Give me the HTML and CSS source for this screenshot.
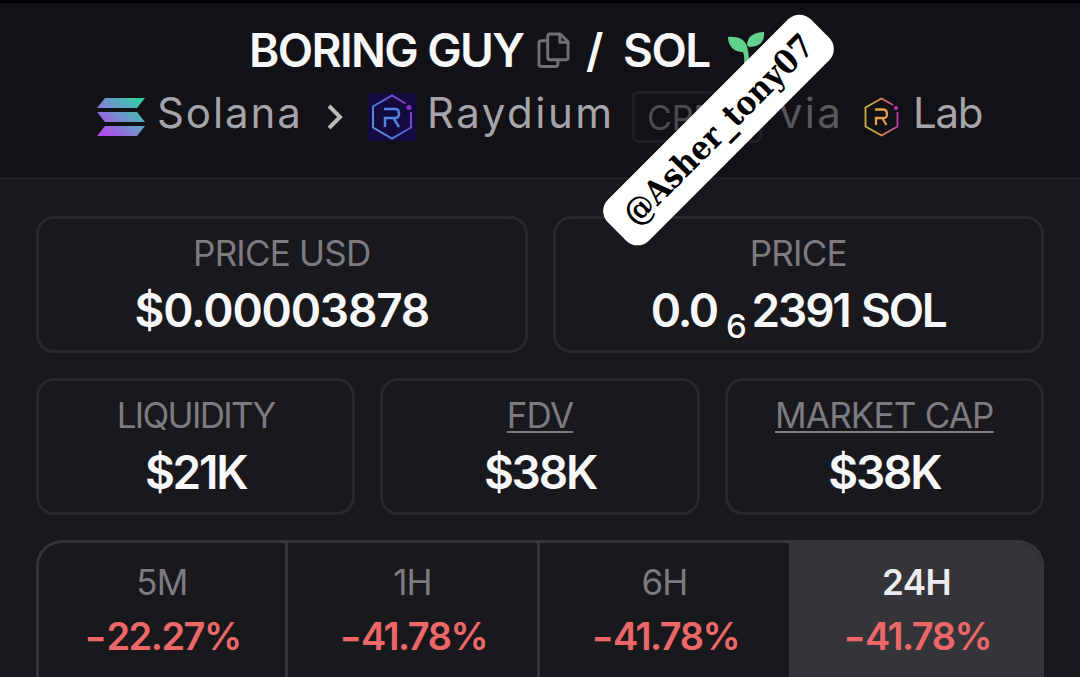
FILE: index.html
```
<!DOCTYPE html>
<html lang="en">
<head>
    <meta charset="UTF-8">
    <title>BORING GUY / SOL</title>
    <link rel="stylesheet" href="styles.css">
</head>

<body>

    <div class="header">
        <div class="pair-row">
            <span class="token-name">BORING GUY</span>
            <svg class="copy-icon" viewBox="0 0 34 38" fill="none" stroke="#717175" stroke-width="3" stroke-linejoin="round">
                <path d="M10 9H4.5Q2 9 2 11.5V33Q2 35.500 4.500 35.500H19Q21.500 35.500 21.500 33V28.500"/>
                <path d="M13.500 2H24L32 10V26Q32 28.500 29.500 28.500H13.500Q11 28.500 11 26V4.500Q11 2 13.500 2Z"/>
                <path d="M23.500 2V10.500H32"/>
            </svg>
            <span class="slash">/</span>
            <span class="quote-name">SOL</span>
            <svg class="sprout-icon" viewBox="0 0 40 36" fill="#62d18d">
                <path d="M0 5C11 4 19 8 20 19C21 22 21 30 21 36H16C16 30 17 25 15 20C6 20 0 14 0 5Z"/>
                <path d="M36 0C37 10 31 15 21 15L19 13C19 5 26 0 36 0Z"/>
            </svg>
        </div>

        <div class="chain-row">
            <svg class="solana-icon" viewBox="0 0 48 38">
                <defs>
                    <linearGradient id="sol" gradientUnits="userSpaceOnUse" x1="44" y1="0" x2="8" y2="40">
                        <stop offset="0" stop-color="#2bd3a0"/>
                        <stop offset="0.5" stop-color="#7092cc"/>
                        <stop offset="1" stop-color="#b645ed"/>
                    </linearGradient>
                </defs>
                <g fill="url(#sol)">
                    <path d="M8 0H48L40 10H0Z"/>
                    <path d="M0 14H40L48 24H8Z"/>
                    <path d="M8 28H48L40 38H0Z"/>
                </g>
            </svg>
            <span class="chain">Solana</span>
            <svg class="chevron" viewBox="0 0 16 26" fill="none" stroke="#b9b9b9" stroke-width="4">
                <path d="M2 2L13 13L2 24"/>
            </svg>
            <svg class="raydium-icon" viewBox="0 0 48 48" fill="none">
                <defs>
                    <linearGradient id="ray" x1="0" y1="1" x2="1" y2="0.2">
                        <stop offset="0" stop-color="#619bdc"/>
                        <stop offset="0.55" stop-color="#5267d2"/>
                        <stop offset="1" stop-color="#9b2bc6"/>
                    </linearGradient>
                </defs>
                <rect width="48" height="48" fill="#130b40"/>
                <path d="M37.500 10.500L24 2.500L5 13.500V34.500L24 45.500L43 34.500V19" stroke="url(#ray)" stroke-width="2"/>
                <path d="M16 16H27Q31 16 31 20.500T27 25H17V34M26 26L31 34" stroke="#5584dd" stroke-width="2.500"/>
                <circle cx="41" cy="14.500" r="2.500" fill="#8b35c9"/>
            </svg>
            <span class="dex">Raydium</span>
            <span class="pool-type">CPMM</span>
            <span class="via">via</span>
            <svg class="lab-icon" viewBox="0 0 36 40" fill="none">
                <defs>
                    <linearGradient id="lab" x1="0" y1="0.5" x2="1" y2="0.4">
                        <stop offset="0" stop-color="#c6b63d"/>
                        <stop offset="0.5" stop-color="#dc8a4d"/>
                        <stop offset="1" stop-color="#bd36b4"/>
                    </linearGradient>
                </defs>
                <path d="M29 8L17.500 1.500L1.500 10.500V29.500L17.500 38.500L33.500 29.500V15" stroke="url(#lab)" stroke-width="1.800"/>
                <path d="M11 12.500H19Q23 12.500 23 17T19 21H12V28M18.500 21.500L22.500 28" stroke="#e0a050" stroke-width="2.300"/>
                <circle cx="32" cy="11" r="2" fill="#bd36b4"/>
            </svg>
            <span class="lab">Lab</span>
        </div>
    </div>

    <div class="stats">
        <div class="row">
            <div class="card">
                <span class="label">PRICE USD</span>
                <span class="value">$0.00003878</span>
            </div>
            <div class="card">
                <span class="label">PRICE</span>
                <span class="value price-sol">0.0<span class="zeros">6</span>2391 SOL</span>
            </div>
        </div>

        <div class="row">
            <div class="card">
                <span class="label liquidity">LIQUIDITY</span>
                <span class="value short">$21K</span>
            </div>
            <div class="card">
                <span class="label underlined">FDV</span>
                <span class="value short">$38K</span>
            </div>
            <div class="card">
                <span class="label underlined">MARKET CAP</span>
                <span class="value short">$38K</span>
            </div>
        </div>

        <div class="tabs">
            <div class="tab">
                <span class="label">5M</span>
                <span class="change"><span class="minus">−</span>22.27%</span>
            </div>
            <div class="tab">
                <span class="label">1H</span>
                <span class="change"><span class="minus">−</span>41.78%</span>
            </div>
            <div class="tab">
                <span class="label">6H</span>
                <span class="change"><span class="minus">−</span>41.78%</span>
            </div>
            <div class="tab active">
                <span class="label">24H</span>
                <span class="change"><span class="minus">−</span>41.78%</span>
            </div>
        </div>
    </div>

    <div class="handle">@Asher_tony07</div>

</body>
</html>
```
FILE: styles.css
```
* {
    box-sizing: border-box;
}

body {
    background-color: #19181d;
    font-family: Inter, "Liberation Sans", sans-serif;
    margin: 0;
    height: 677px;
    overflow: hidden;
    position: relative;
}

svg {
    display: block;
    flex: none;
}

span {
    white-space: nowrap;
}

.header {
    height: 180px;
    background-color: #121116;
    border-top: 3px solid #000;
    border-bottom: 3px solid #202024;
    padding-top: 17px;
}

/* token pair */
.pair-row {
    display: flex;
    align-items: center;
    height: 60px;
    padding-left: 249px;
    color: #f8f8fa;
    font-size: 46px;
    font-weight: 600;
}

.token-name {
    width: 288px;
    letter-spacing: -1.6px;
}

.copy-icon {
    width: 33px;
    height: 37px;
}

.slash {
    width: 53px;
    padding-left: 16px;
    font-weight: 600;
}

.quote-name {
    width: 105px;
    letter-spacing: -1.5px;
}

.sprout-icon {
    width: 40px;
    height: 36px;
}

/* chain and exchange */
.chain-row {
    display: flex;
    align-items: center;
    height: 74px;
    padding-left: 97px;
    color: #a5a4a8;
    font-size: 42px;
    font-weight: 400;
}

.chain-row span {
    padding-bottom: 10px;
}

.solana-icon {
    width: 48px;
    height: 38px;
    margin-right: 12px;
}

.chain {
    width: 170px;
    letter-spacing: 1.9px;
}

.chevron {
    width: 16px;
    height: 26px;
    margin-right: 25px;
}

.raydium-icon {
    width: 48px;
    height: 48px;
    margin-right: 11px;
}

.dex {
    width: 205px;
    letter-spacing: 2.5px;
}

.chain-row .pool-type {
    width: 130px;
    height: 52px;
    border: 3px solid #1f1e22;
    border-radius: 6px;
    padding: 0 0 0 12px;
    line-height: 47px;
    color: #4c4b50;
    font-size: 34px;
    font-weight: 400;
}

.via {
    width: 85px;
    margin-left: 17px;
    color: #59585d;
    letter-spacing: 2.2px;
}

.lab-icon {
    width: 36px;
    height: 40px;
    margin-right: 13px;
}

.lab {
    letter-spacing: -1.3px;
}

/* stats */
.stats {
    display: flex;
    flex-direction: column;
    gap: 25px;
    padding: 36px 36px 0;
}

.row {
    display: flex;
    gap: 25px;
}

.card {
    flex: 1;
    height: 137px;
    border: 3px solid #29282d;
    border-radius: 18px;
    padding-top: 13px;
    display: flex;
    flex-direction: column;
    align-items: center;
}

.label {
    height: 42px;
    line-height: 42px;
    color: #7c7b80;
    font-size: 35px;
    font-weight: 400;
    letter-spacing: -0.8px;
}

.liquidity {
    letter-spacing: -1.7px;
}

.underlined {
    text-decoration: underline;
    text-decoration-thickness: 2px;
    text-underline-offset: 3px;
    text-decoration-skip-ink: none;
}

.value {
    height: 72px;
    line-height: 72px;
    color: #f8f8fa;
    font-size: 46px;
    font-weight: 600;
    letter-spacing: -1.2px;
}

.price-sol {
    letter-spacing: -2.2px;
    word-spacing: 2px;
}

.short {
    letter-spacing: -2.2px;
}

.zeros {
    display: inline-block;
    font-size: 33px;
    font-weight: 500;
    line-height: 1;
    margin: 0 7px 0 9px;
    transform: translateY(11px);
}

/* time frames */
.tabs {
    display: grid;
    grid-template-columns: 249px 252px 252px 1fr;
    height: 170px;
    border: 3px solid #353439;
    border-radius: 26px;
    overflow: hidden;
}

.tab {
    border-right: 3px solid #353439;
    padding-top: 18px;
    display: flex;
    flex-direction: column;
    align-items: center;
}

.tab.active {
    background-color: #353439;
    border-right: none;
}

.active .label {
    color: #ececef;
    font-weight: 600;
    letter-spacing: -0.6px;
}

.change {
    height: 66px;
    line-height: 66px;
    color: #ec6868;
    font-size: 38px;
    font-weight: 600;
    letter-spacing: -1.5px;
}

.minus {
    display: inline-block;
    transform: scaleX(0.85);
    margin-right: -1px;
}

/* handle sticker on top of the page */
.handle {
    position: absolute;
    left: 575px;
    top: 101px;
    width: 287px;
    height: 58px;
    border-radius: 16px;
    background-color: #fff;
    color: #000;
    font-family: "DejaVu Serif Condensed", "DejaVu Serif", serif;
    font-stretch: condensed;
    font-size: 33px;
    font-weight: bold;
    line-height: 58px;
    text-align: center;
    white-space: nowrap;
    transform: rotate(-45deg);
}
```
